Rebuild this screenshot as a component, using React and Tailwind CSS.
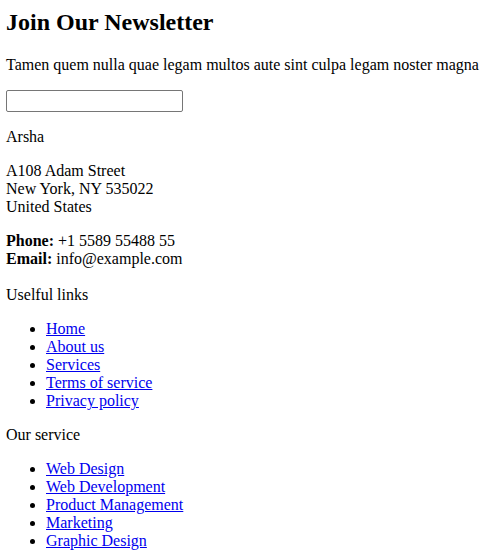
import React from 'react';

const usefulLinks = ['Home', 'About us', 'Services', 'Terms of service', 'Privacy policy'];
const services = ['Web Design', 'Web Development', 'Product Management', 'Marketing', 'Graphic Design'];

function LinkList({ items }) {
  return (
    <ul className="list-disc pl-10 my-4">
      {items.map((item) => (
        <li key={item}>
          <a href="#" className="text-[#0000ee] underline">
            {item}
          </a>
        </li>
      ))}
    </ul>
  );
}

export default function App() {
  return (
    <div
      className="bg-white text-black text-[16px] leading-[normal] px-[6px] pt-[9px] min-h-[560px]"
      style={{ fontFamily: '"Liberation Serif", "Times New Roman", serif' }}
    >
      <h2 className="text-[24px] font-bold leading-[normal] mb-[20px]">Join Our Newsletter</h2>
      <p className="mb-4">Tamen quem nulla quae legam multos aute sint culpa legam noster magna</p>
      <form onSubmit={(e) => e.preventDefault()}>
        <input
          type="email"
          name="email"
          className="block w-[177px] h-[22px] border border-[#767676] rounded-[2px] px-[2px] bg-white"
        />
      </form>

      <p className="my-4">Arsha</p>
      <p className="my-4">
        A108 Adam Street
        <br />
        New York, NY 535022
        <br />
        United States
      </p>
      <p className="mt-4 mb-[18px]">
        <strong className="font-bold">Phone:</strong> +1 5589 55488 55
        <br />
        <strong className="font-bold">Email:</strong> info@example.com
      </p>

      <p className="my-4">Uselful links</p>
      <LinkList items={usefulLinks} />

      <p className="my-4">Our service</p>
      <LinkList items={services} />
    </div>
  );
}
